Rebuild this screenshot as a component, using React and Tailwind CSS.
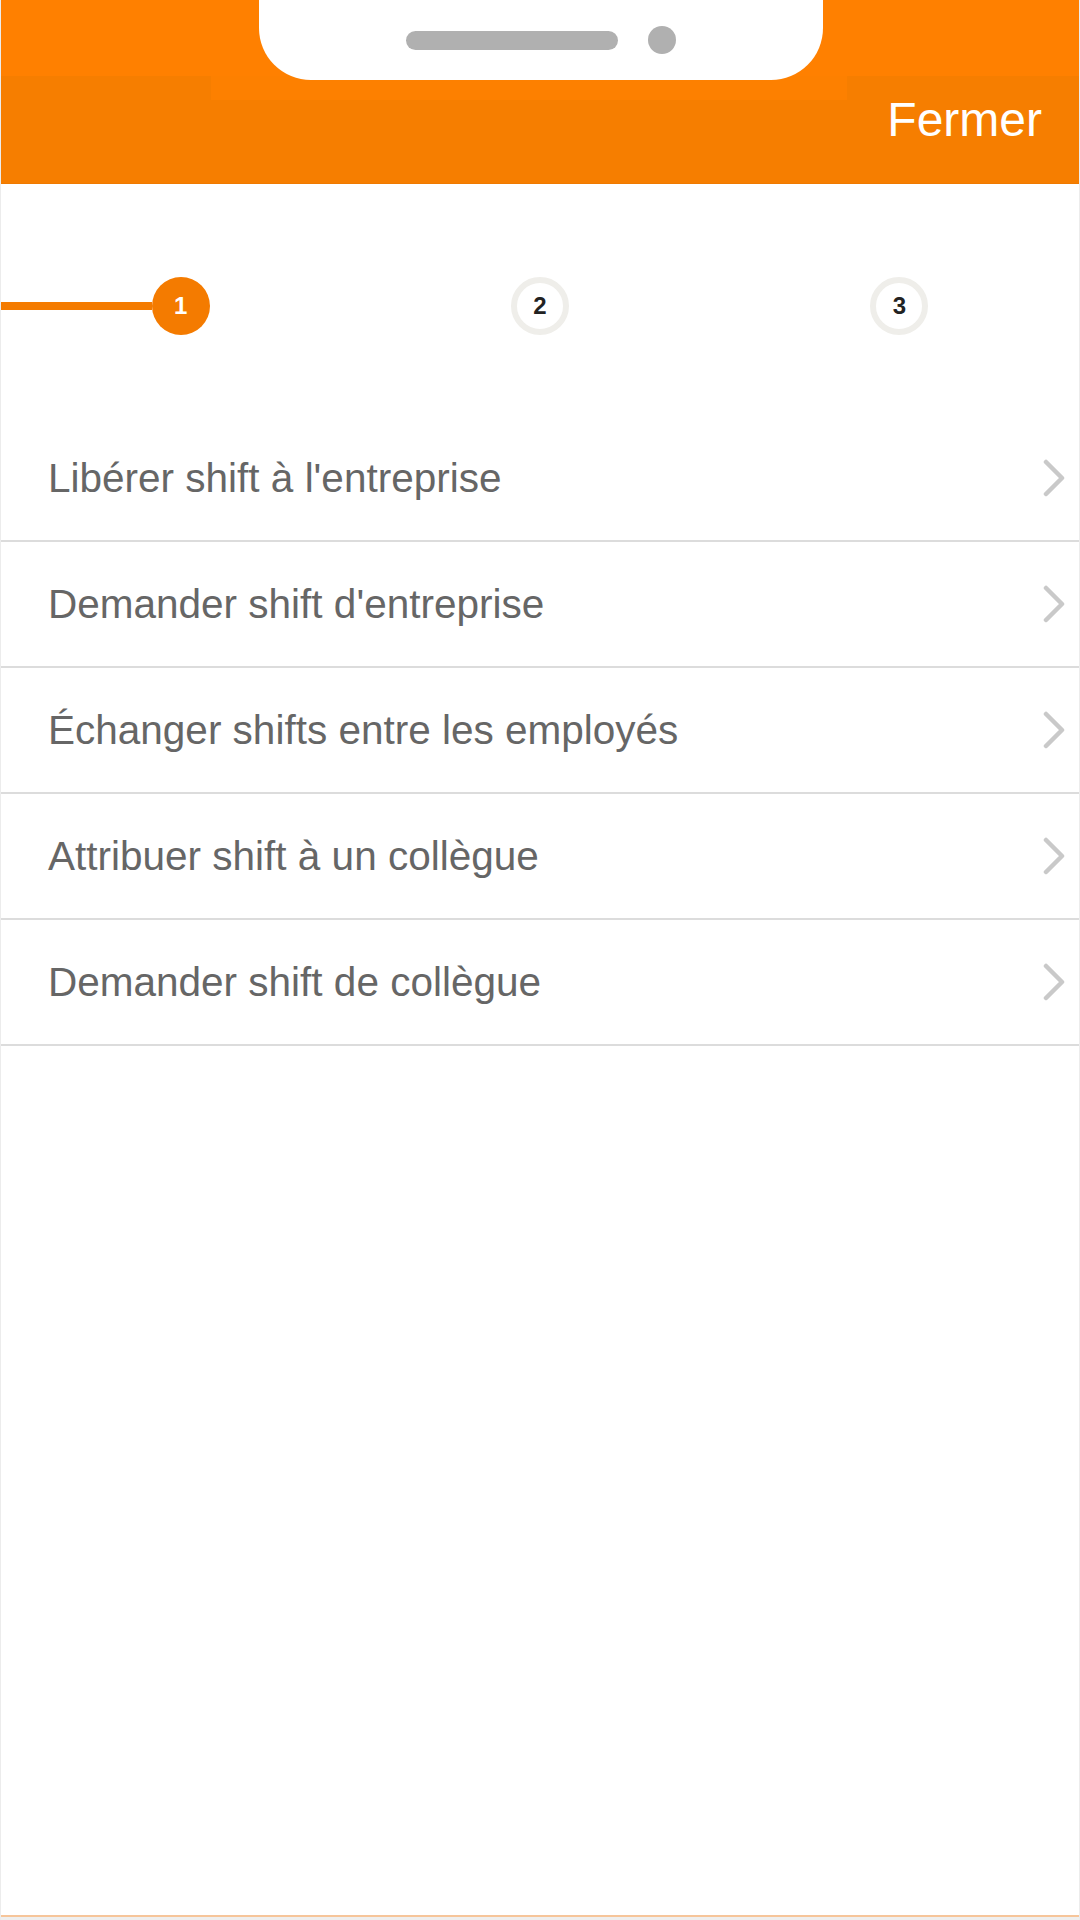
import React from 'react';

const options = [
  "Libérer shift à l'entreprise",
  "Demander shift d'entreprise",
  'Échanger shifts entre les employés',
  'Attribuer shift à un collègue',
  'Demander shift de collègue',
];

const Chevron = () => (
  <svg width="24" height="38" viewBox="0 0 24 38" fill="none">
    <polyline
      points="4,3 20,19 4,35"
      stroke="#c9c9c9"
      strokeWidth="4.5"
      strokeLinecap="round"
      strokeLinejoin="round"
    />
  </svg>
);

const Step = ({ n, active }) =>
  active ? (
    <div className="w-[58px] h-[58px] rounded-full bg-[#f47b00] flex items-center justify-center text-white text-[24px] font-semibold leading-none">
      {n}
    </div>
  ) : (
    <div className="w-[58px] h-[58px] rounded-full bg-white border-[6px] border-[#efeeea] flex items-center justify-center text-[#222222] text-[24px] font-semibold leading-none">
      {n}
    </div>
  );

export default function App() {
  return (
    <div
      className="w-[1080px] h-[1920px] flex flex-col bg-white border-x border-[#ececec]"
      style={{ fontFamily: '"Liberation Sans", Arial, sans-serif' }}
    >
      {/* Header */}
      <div className="relative h-[184px] flex flex-col bg-[#f67e00] border-b border-[#ef7a00]">
        <div className="h-[76px] bg-[#ff8000]" />
        <div className="absolute top-[76px] left-[210px] w-[636px] h-[24px] bg-[#fd8000]" />
        {/* device notch */}
        <div className="absolute top-0 left-[258px] w-[564px] h-[80px] bg-white rounded-b-[52px] flex items-center justify-center gap-[30px]">
          <div className="w-[212px] h-[19px] rounded-full bg-[#b0b0b0]" />
          <div className="w-[28px] h-[28px] rounded-full bg-[#b0b0b0]" />
        </div>
        <div className="relative flex justify-end pr-[37px] pt-[20px]">
          <span className="text-white text-[48px] leading-none">Fermer</span>
        </div>
      </div>

      <div className="flex-1 flex flex-col">
        {/* Stepper */}
        <div className="h-[232px] pt-[93px] grid grid-cols-3">
          <div className="flex items-center h-[58px]">
            <div className="flex-1 h-[8px] bg-[#f47b00]" />
            <Step n="1" active />
            <div className="flex-1" />
          </div>
          <div className="flex items-center justify-center h-[58px]">
            <Step n="2" />
          </div>
          <div className="flex items-center justify-center h-[58px]">
            <Step n="3" />
          </div>
        </div>

        {/* Options */}
        <div className="flex flex-col">
          {options.map((label) => (
            <div
              key={label}
              className="h-[126px] flex items-center justify-between pl-[47px] pr-[13px] border-b-2 border-[#dcdcdc]"
            >
              <span className="text-[40.5px] text-[#666666] leading-none">{label}</span>
              <Chevron />
            </div>
          ))}
        </div>
      </div>

      <div className="h-[2px] bg-[#f6c59a]" />
      <div className="h-[3px] bg-[#efefef]" />
    </div>
  );
}
